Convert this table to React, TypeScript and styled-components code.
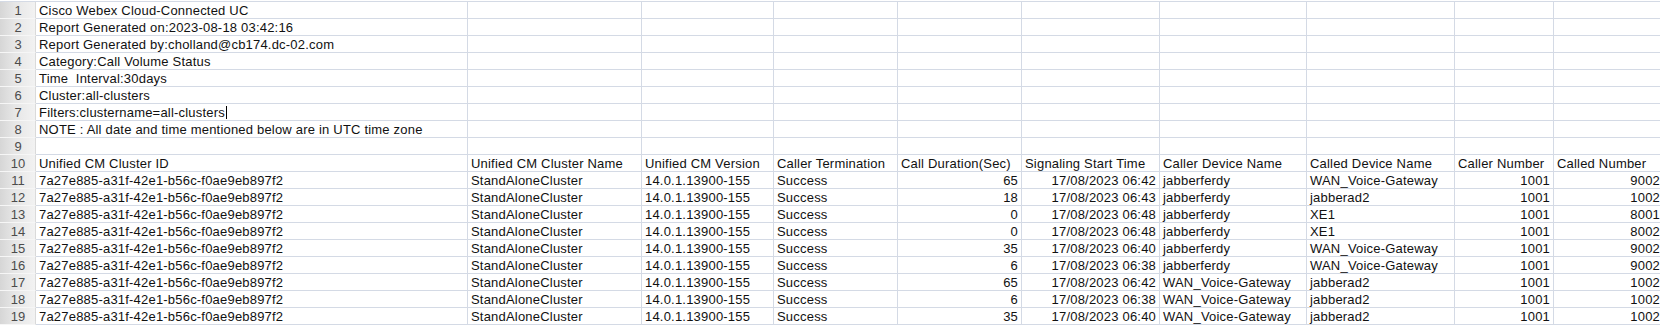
import React from 'react';
import styled, { createGlobalStyle } from 'styled-components';

const COLUMN_WIDTHS = [432, 174, 132, 124, 124, 138, 147, 148, 99, 110];
const GRID_LINE = '#d4dae5';

const GlobalStyle = createGlobalStyle`
  html, body {
    margin: 0;
    padding: 0;
    background: #ffffff;
    overflow: hidden;
  }
  body {
    font-family: "Liberation Sans", Arial, Helvetica, sans-serif;
  }
`;

const Page = styled.div`
  width: 1660px;
  height: 325px;
  padding-top: 1px;
  box-sizing: border-box;
  overflow: hidden;
  background: #ffffff;
`;

const Sheet = styled.div`
  display: grid;
  grid-template-columns: 36px ${COLUMN_WIDTHS.map((w) => `${w}px`).join(' ')};
  grid-auto-rows: 17px;
  border-top: 1px solid ${GRID_LINE};
  font-size: 13px;
  letter-spacing: 0.2px;
  color: #111111;
`;

const RowHead = styled.div`
  box-sizing: border-box;
  display: flex;
  align-items: center;
  justify-content: center;
  padding: 1px 0 0 1px;
  background: linear-gradient(to right, #d6d6d6 0%, #e6e6e6 40%, #f2f2f2 100%);
  border-bottom: 1px solid #f6f6f6;
  border-right: 1px solid #dadada;
  color: #4c4c4c;
  font-size: 13px;
  letter-spacing: 0;
`;

const Cell = styled.div<{ $align?: 'left' | 'right' }>`
  box-sizing: border-box;
  display: flex;
  align-items: center;
  justify-content: ${(p) => (p.$align === 'right' ? 'flex-end' : 'flex-start')};
  padding: 1px 3px 0 3px;
  border-right: 1px solid ${GRID_LINE};
  border-bottom: 1px solid ${GRID_LINE};
  white-space: pre;
  overflow: hidden;
`;

const Caret = styled.span`
  display: inline-block;
  width: 0;
  height: 13px;
  margin-left: 1px;
  border-left: 1px solid #000000;
`;

const META_LINES: React.ReactNode[] = [
  'Cisco Webex Cloud-Connected UC',
  'Report Generated on:2023-08-18 03:42:16',
  'Report Generated by:cholland@cb174.dc-02.com',
  'Category:Call Volume Status',
  'Time  Interval:30days',
  'Cluster:all-clusters',
  <>
    Filters:clustername=all-clusters
    <Caret />
  </>,
  'NOTE : All date and time mentioned below are in UTC time zone',
  '',
];

const HEADERS = [
  'Unified CM Cluster ID',
  'Unified CM Cluster Name',
  'Unified CM Version',
  'Caller Termination',
  'Call Duration(Sec)',
  'Signaling Start Time',
  'Caller Device Name',
  'Called Device Name',
  'Caller Number',
  'Called Number',
];

// columns that hold numbers / dates are right-aligned like in the spreadsheet
const RIGHT_ALIGNED = [4, 5, 8, 9];

type CallRecord = [number, string, string, string, number, number];

const CALLS: CallRecord[] = [
  [65, '06:42', 'jabberferdy', 'WAN_Voice-Gateway', 1001, 9002],
  [18, '06:43', 'jabberferdy', 'jabberad2', 1001, 1002],
  [0, '06:48', 'jabberferdy', 'XE1', 1001, 8001],
  [0, '06:48', 'jabberferdy', 'XE1', 1001, 8002],
  [35, '06:40', 'jabberferdy', 'WAN_Voice-Gateway', 1001, 9002],
  [6, '06:38', 'jabberferdy', 'WAN_Voice-Gateway', 1001, 9002],
  [65, '06:42', 'WAN_Voice-Gateway', 'jabberad2', 1001, 1002],
  [6, '06:38', 'WAN_Voice-Gateway', 'jabberad2', 1001, 1002],
  [35, '06:40', 'WAN_Voice-Gateway', 'jabberad2', 1001, 1002],
];

const toCells = ([duration, time, caller, called, callerNo, calledNo]: CallRecord) => [
  '7a27e885-a31f-42e1-b56c-f0ae9eb897f2',
  'StandAloneCluster',
  '14.0.1.13900-155',
  'Success',
  String(duration),
  `17/08/2023 ${time}`,
  caller,
  called,
  String(callerNo),
  String(calledNo),
];

const SheetRow: React.FC<{ index: number; cells: React.ReactNode[]; numeric?: boolean }> = ({
  index,
  cells,
  numeric = false,
}) => (
  <>
    <RowHead>{index}</RowHead>
    {COLUMN_WIDTHS.map((_, col) => (
      <Cell key={col} $align={numeric && RIGHT_ALIGNED.includes(col) ? 'right' : 'left'}>
        {cells[col] ?? ''}
      </Cell>
    ))}
  </>
);

const App: React.FC = () => {
  let rowNumber = 0;

  return (
    <>
      <GlobalStyle />
      <Page>
        <Sheet>
          {META_LINES.map((line) => {
            rowNumber += 1;
            return <SheetRow key={rowNumber} index={rowNumber} cells={[line]} />;
          })}
          <SheetRow index={++rowNumber} cells={HEADERS} />
          {CALLS.map((call) => {
            rowNumber += 1;
            return <SheetRow key={rowNumber} index={rowNumber} cells={toCells(call)} numeric />;
          })}
        </Sheet>
      </Page>
    </>
  );
};

export default App;
